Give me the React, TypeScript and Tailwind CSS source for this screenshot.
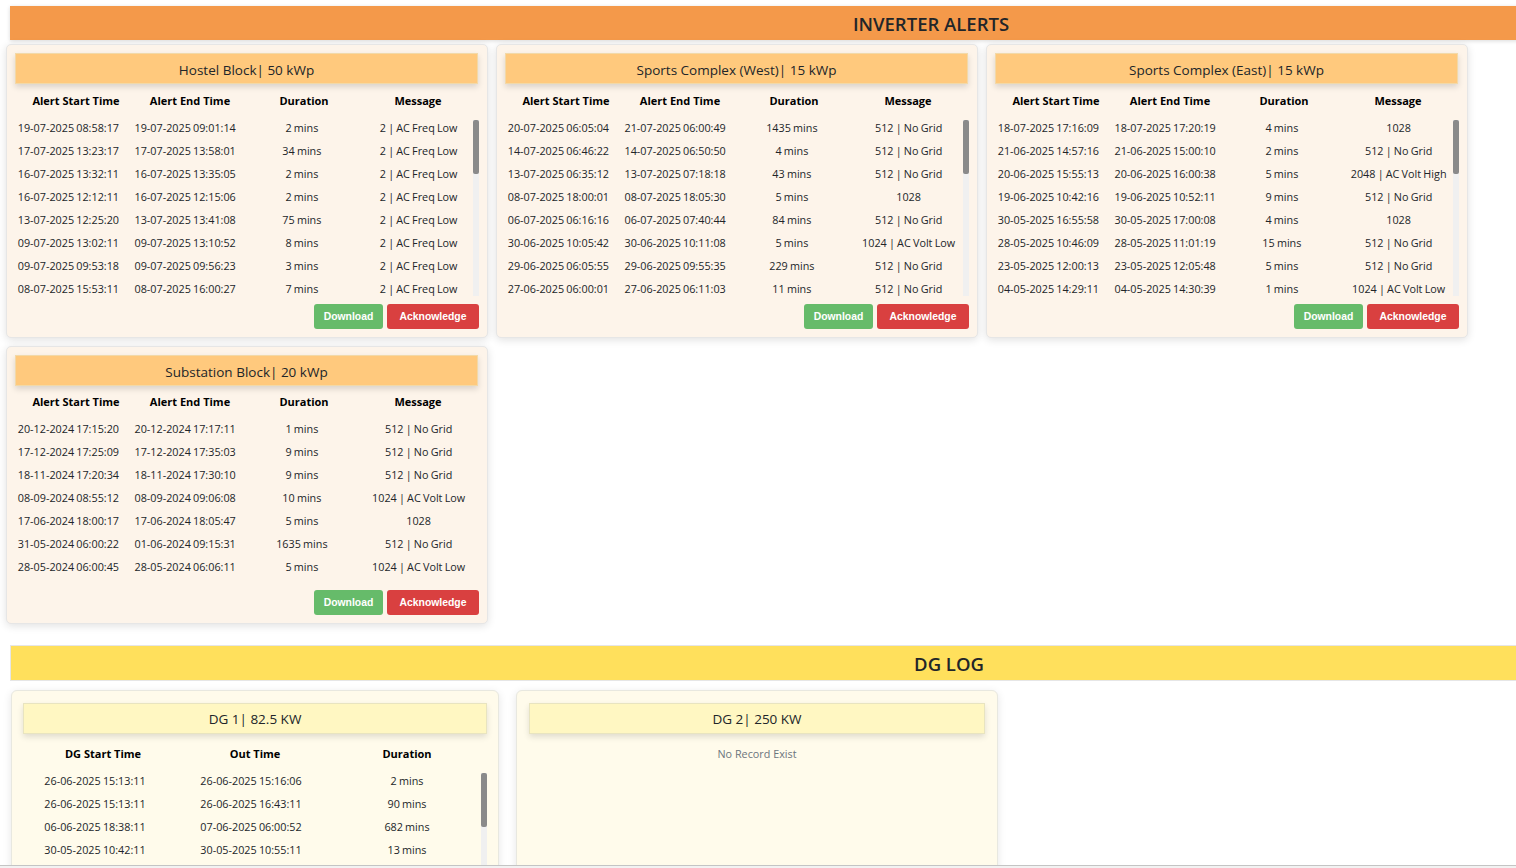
const F = "[font-family:'Open_Sans','Noto_Sans',sans-serif]";

type Row = string[];
const hostel: Row[] = [
  ["19-07-2025 08:58:17","19-07-2025 09:01:14","2 mins","2 | AC Freq Low"],
  ["17-07-2025 13:23:17","17-07-2025 13:58:01","34 mins","2 | AC Freq Low"],
  ["16-07-2025 13:32:11","16-07-2025 13:35:05","2 mins","2 | AC Freq Low"],
  ["16-07-2025 12:12:11","16-07-2025 12:15:06","2 mins","2 | AC Freq Low"],
  ["13-07-2025 12:25:20","13-07-2025 13:41:08","75 mins","2 | AC Freq Low"],
  ["09-07-2025 13:02:11","09-07-2025 13:10:52","8 mins","2 | AC Freq Low"],
  ["09-07-2025 09:53:18","09-07-2025 09:56:23","3 mins","2 | AC Freq Low"],
  ["08-07-2025 15:53:11","08-07-2025 16:00:27","7 mins","2 | AC Freq Low"],
];
const west: Row[] = [
  ["20-07-2025 06:05:04","21-07-2025 06:00:49","1435 mins","512 | No Grid"],
  ["14-07-2025 06:46:22","14-07-2025 06:50:50","4 mins","512 | No Grid"],
  ["13-07-2025 06:35:12","13-07-2025 07:18:18","43 mins","512 | No Grid"],
  ["08-07-2025 18:00:01","08-07-2025 18:05:30","5 mins","1028"],
  ["06-07-2025 06:16:16","06-07-2025 07:40:44","84 mins","512 | No Grid"],
  ["30-06-2025 10:05:42","30-06-2025 10:11:08","5 mins","1024 | AC Volt Low"],
  ["29-06-2025 06:05:55","29-06-2025 09:55:35","229 mins","512 | No Grid"],
  ["27-06-2025 06:00:01","27-06-2025 06:11:03","11 mins","512 | No Grid"],
];
const east: Row[] = [
  ["18-07-2025 17:16:09","18-07-2025 17:20:19","4 mins","1028"],
  ["21-06-2025 14:57:16","21-06-2025 15:00:10","2 mins","512 | No Grid"],
  ["20-06-2025 15:55:13","20-06-2025 16:00:38","5 mins","2048 | AC Volt High"],
  ["19-06-2025 10:42:16","19-06-2025 10:52:11","9 mins","512 | No Grid"],
  ["30-05-2025 16:55:58","30-05-2025 17:00:08","4 mins","1028"],
  ["28-05-2025 10:46:09","28-05-2025 11:01:19","15 mins","512 | No Grid"],
  ["23-05-2025 12:00:13","23-05-2025 12:05:48","5 mins","512 | No Grid"],
  ["04-05-2025 14:29:11","04-05-2025 14:30:39","1 mins","1024 | AC Volt Low"],
];
const sub: Row[] = [
  ["20-12-2024 17:15:20","20-12-2024 17:17:11","1 mins","512 | No Grid"],
  ["17-12-2024 17:25:09","17-12-2024 17:35:03","9 mins","512 | No Grid"],
  ["18-11-2024 17:20:34","18-11-2024 17:30:10","9 mins","512 | No Grid"],
  ["08-09-2024 08:55:12","08-09-2024 09:06:08","10 mins","1024 | AC Volt Low"],
  ["17-06-2024 18:00:17","17-06-2024 18:05:47","5 mins","1028"],
  ["31-05-2024 06:00:22","01-06-2024 09:15:31","1635 mins","512 | No Grid"],
  ["28-05-2024 06:00:45","28-05-2024 06:06:11","5 mins","1024 | AC Volt Low"],
];
const dg: Row[] = [
  ["26-06-2025 15:13:11","26-06-2025 15:16:06","2 mins"],
  ["26-06-2025 15:13:11","26-06-2025 16:43:11","90 mins"],
  ["06-06-2025 18:38:11","07-06-2025 06:00:52","682 mins"],
  ["30-05-2025 10:42:11","30-05-2025 10:55:11","13 mins"],
];

function ScrollBar() {
  return (
    <div className="absolute bottom-0 right-0 top-0 w-[6px] bg-[#f0f0f0]">
      <div className="h-[54px] w-full rounded-[2px] bg-[#8a8a8a]" />
    </div>
  );
}

function Buttons({ mt }: { mt: string }) {
  return (
    <div className={`flex justify-end gap-[4px] pb-[8px] ${mt}`}>
      <button className="h-[25px] w-[69px] rounded-[3px] bg-[#66bb6a] font-['Liberation_Sans',sans-serif] text-[10.4px] font-bold text-white">Download</button>
      <button className="h-[25px] w-[92px] rounded-[3px] bg-[#d94040] font-['Liberation_Sans',sans-serif] text-[10.4px] font-bold text-white">Acknowledge</button>
    </div>
  );
}

function AlertRows({ rows }: { rows: Row[] }) {
  return (
    <>
      {rows.map((r, i) => (
        <div key={i} className="grid h-[23px] w-[467px] grid-cols-4 items-center text-center text-[10.8px] text-[#212529] [word-spacing:-0.6px]">
          {r.map((c, j) => (
            <div key={j} className="whitespace-nowrap">{c}</div>
          ))}
        </div>
      ))}
    </>
  );
}

function AlertCard({ title, rows, scroll }: { title: string; rows: Row[]; scroll?: boolean }) {
  return (
    <div className="w-[482px] rounded-[5px] border border-[#e6e6e6] bg-[#fdf4ea] px-[8px] pt-[8px] shadow-[0_2px_8px_rgba(0,0,0,0.12)]">
      <div className="mr-px flex h-[31px] items-center justify-center border border-[#f2d9a8] bg-[#ffc97d] pt-[4px] text-[13.5px] text-[#212529] shadow-[0_3px_6px_rgba(0,0,0,0.14)]">
        {title}
      </div>
      <div className={`ml-[4px] grid h-[18px] w-[456px] grid-cols-4 items-center text-center text-[11px] font-bold text-black ${scroll ? "mt-[8px]" : "mt-[7px]"}`}>
        <div>Alert Start Time</div>
        <div>Alert End Time</div>
        <div>Duration</div>
        <div>Message</div>
      </div>
      {scroll ? (
        <div className="relative -ml-[5px] mt-[10px] h-[176px] w-[469px] overflow-hidden">
          <div className="-mt-[3px]">
            <AlertRows rows={rows} />
          </div>
          <ScrollBar />
        </div>
      ) : (
        <div className="-ml-[5px] mt-[7px] w-[469px]">
          <AlertRows rows={rows} />
        </div>
      )}
      <Buttons mt={scroll ? "mt-[8px]" : "mt-[11px]"} />
    </div>
  );
}

function DgCard({ title, rows }: { title: string; rows?: Row[] }) {
  return (
    <div className="h-[200px] rounded-t-[6px] border border-[#e8e8e0] bg-[#fffbeb] px-[11px] pt-[12px] shadow-[0_2px_8px_rgba(0,0,0,0.1)]">
      <div className={`flex h-[31px] items-center justify-center border border-[#e8e4c0] bg-[#fff7c2] pt-[2px] text-[13.5px] text-[#212529] shadow-[0_3px_6px_rgba(0,0,0,0.12)] ${rows ? "" : "mx-px"}`}>
        {title}
      </div>
      {rows ? (
        <>
          <div className="ml-[4px] mt-[11px] grid h-[18px] w-[456px] grid-cols-3 items-center text-center text-[11px] font-bold text-black">
            <div>DG Start Time</div>
            <div>Out Time</div>
            <div>Duration</div>
          </div>
          <div className="relative -ml-[6px] mt-[10px] h-[120px] w-[470px] overflow-hidden">
            <div className="-mt-[3px]">
              {rows.map((r, i) => (
                <div key={i} className="grid h-[23px] w-[468px] grid-cols-3 items-center text-center text-[10.8px] text-[#212529] [word-spacing:-0.6px]">
                  {r.map((c, j) => (
                    <div key={j} className="whitespace-nowrap">{c}</div>
                  ))}
                </div>
              ))}
            </div>
            <ScrollBar />
          </div>
        </>
      ) : (
        <div className="mt-[12px] text-center text-[10.8px] text-[#6c757d]">No Record Exist</div>
      )}
    </div>
  );
}

export default function App() {
  return (
    <div className={`flex h-[868px] w-[1516px] flex-col overflow-hidden bg-white ${F}`}>
      <div className="min-h-0 flex-1 overflow-hidden">
        <div className="ml-[10px] mt-[6px] flex h-[34px] w-[1842px] items-center justify-center bg-[#f4994a] pt-[2px] text-[18.5px] font-semibold text-[#212529] shadow-[0_1px_4px_rgba(0,0,0,0.15)]">
          INVERTER ALERTS
        </div>
        <div className="ml-[6px] mt-[4px] flex flex-wrap gap-[8px]">
          <AlertCard title="Hostel Block| 50 kWp" rows={hostel} scroll />
          <AlertCard title="Sports Complex (West)| 15 kWp" rows={west} scroll />
          <AlertCard title="Sports Complex (East)| 15 kWp" rows={east} scroll />
          <AlertCard title="Substation Block| 20 kWp" rows={sub} />
        </div>
        <div className="ml-[10px] mt-[21px] flex h-[36px] w-[1878px] items-center justify-center border border-[#e6e6e6] bg-[#ffe05c] pt-[2px] text-[18.5px] font-semibold text-[#212529]">
          DG LOG
        </div>
        <div className="ml-[11px] mt-[9px] flex gap-[17px]">
          <div className="w-[488px]"><DgCard title="DG 1| 82.5 KW" rows={dg} /></div>
          <div className="w-[482px]"><DgCard title="DG 2| 250 KW" /></div>
        </div>
      </div>
      <div className="h-[3px] shrink-0 border-t border-[#c4c4c4] bg-[#f2f2f2]" />
    </div>
  );
}
